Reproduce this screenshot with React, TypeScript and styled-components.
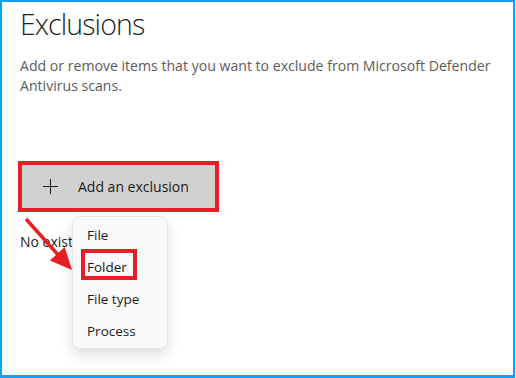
import React from "react";
import styled, { createGlobalStyle } from "styled-components";

const GlobalStyle = createGlobalStyle`
  html, body {
    margin: 0;
    padding: 0;
    background: #ffffff;
  }
  body {
    font-family: "Open Sans", "Noto Sans", sans-serif;
  }
`;

const Frame = styled.div`
  position: relative;
  box-sizing: border-box;
  width: 515px;
  height: 378px;
  border: 2px solid #13a0f4;
  border-bottom-width: 3px;
  padding: 2px 0 0 16px;
  background: #ffffff;
  overflow: hidden;
`;

const Title = styled.h1`
  margin: 0 0 0 2px;
  font-size: 28.5px;
  line-height: 40px;
  font-weight: 300;
  letter-spacing: -0.9px;
  color: #1f1f1f;
`;

const Description = styled.p`
  margin: 12px 0 0 2px;
  font-size: 14.1px;
  line-height: 20px;
  color: #5c5c5c;
  width: 485px;
`;

const Highlight = styled.div`
  position: relative;
  box-sizing: border-box;
  width: 201px;
  height: 51px;
  margin-top: 65px;
  border: 4px solid #e51f25;
`;

const Button = styled.button`
  box-sizing: border-box;
  display: flex;
  align-items: center;
  gap: 20px;
  width: 100%;
  height: 100%;
  padding: 0 0 0 21px;
  border: none;
  background: #d1d1d1;
  font-family: inherit;
  font-size: 14px;
  color: #1b1b1b;
  cursor: pointer;
`;

const EmptyText = styled.p`
  margin: 20px 0 0 2px;
  font-size: 14px;
  line-height: 20px;
  color: #1b1b1b;
`;

const Menu = styled.ul`
  position: absolute;
  left: 50px;
  top: 51px;
  box-sizing: border-box;
  width: 96px;
  height: 133px;
  margin: 0;
  padding: 2px 0;
  list-style: none;
  background: #f9f9f9;
  border: 1px solid #e6e6e6;
  border-radius: 8px;
  box-shadow: 0 6px 14px rgba(0, 0, 0, 0.13);
  z-index: 2;
`;

const MenuItem = styled.li<{ $marked?: boolean }>`
  position: relative;
  height: 32px;
  display: flex;
  align-items: center;
  padding-left: 14px;
  font-size: 13.5px;
  color: #1b1b1b;

  &::after {
    content: "";
    display: ${(p) => (p.$marked ? "block" : "none")};
    position: absolute;
    left: 8px;
    top: -2px;
    width: 56px;
    height: 31px;
    box-sizing: border-box;
    border: 4px solid #e51f25;
  }
`;

const Arrow = styled.svg`
  position: absolute;
  left: 18px;
  top: 210px;
  z-index: 3;
`;

const PlusIcon = () => (
  <svg width="15" height="15" viewBox="0 0 15 15">
    <path d="M7.5 0v15M0 7.5h15" stroke="#1b1b1b" strokeWidth="1" />
  </svg>
);

const items = ["File", "Folder", "File type", "Process"];

export default function App() {
  return (
    <>
      <GlobalStyle />
      <Frame>
        <Title>Exclusions</Title>
        <Description>
          Add or remove items that you want to exclude from Microsoft Defender
          Antivirus scans.
        </Description>
        <Highlight>
          <Button>
            <PlusIcon />
            Add an exclusion
          </Button>
          <Menu>
            {items.map((x) => (
              <MenuItem key={x} $marked={x === "Folder"}>
                {x}
              </MenuItem>
            ))}
          </Menu>
        </Highlight>
        <EmptyText>No existing exclusions.</EmptyText>
        <Arrow width="60" height="65" viewBox="20 212 60 65">
          <line x1="26" y1="219" x2="60" y2="257" stroke="#e51f25" strokeWidth="3.5" />
          <polygon points="72,270 49.9,260.4 64.7,247" fill="#e51f25" />
        </Arrow>
      </Frame>
    </>
  );
}
